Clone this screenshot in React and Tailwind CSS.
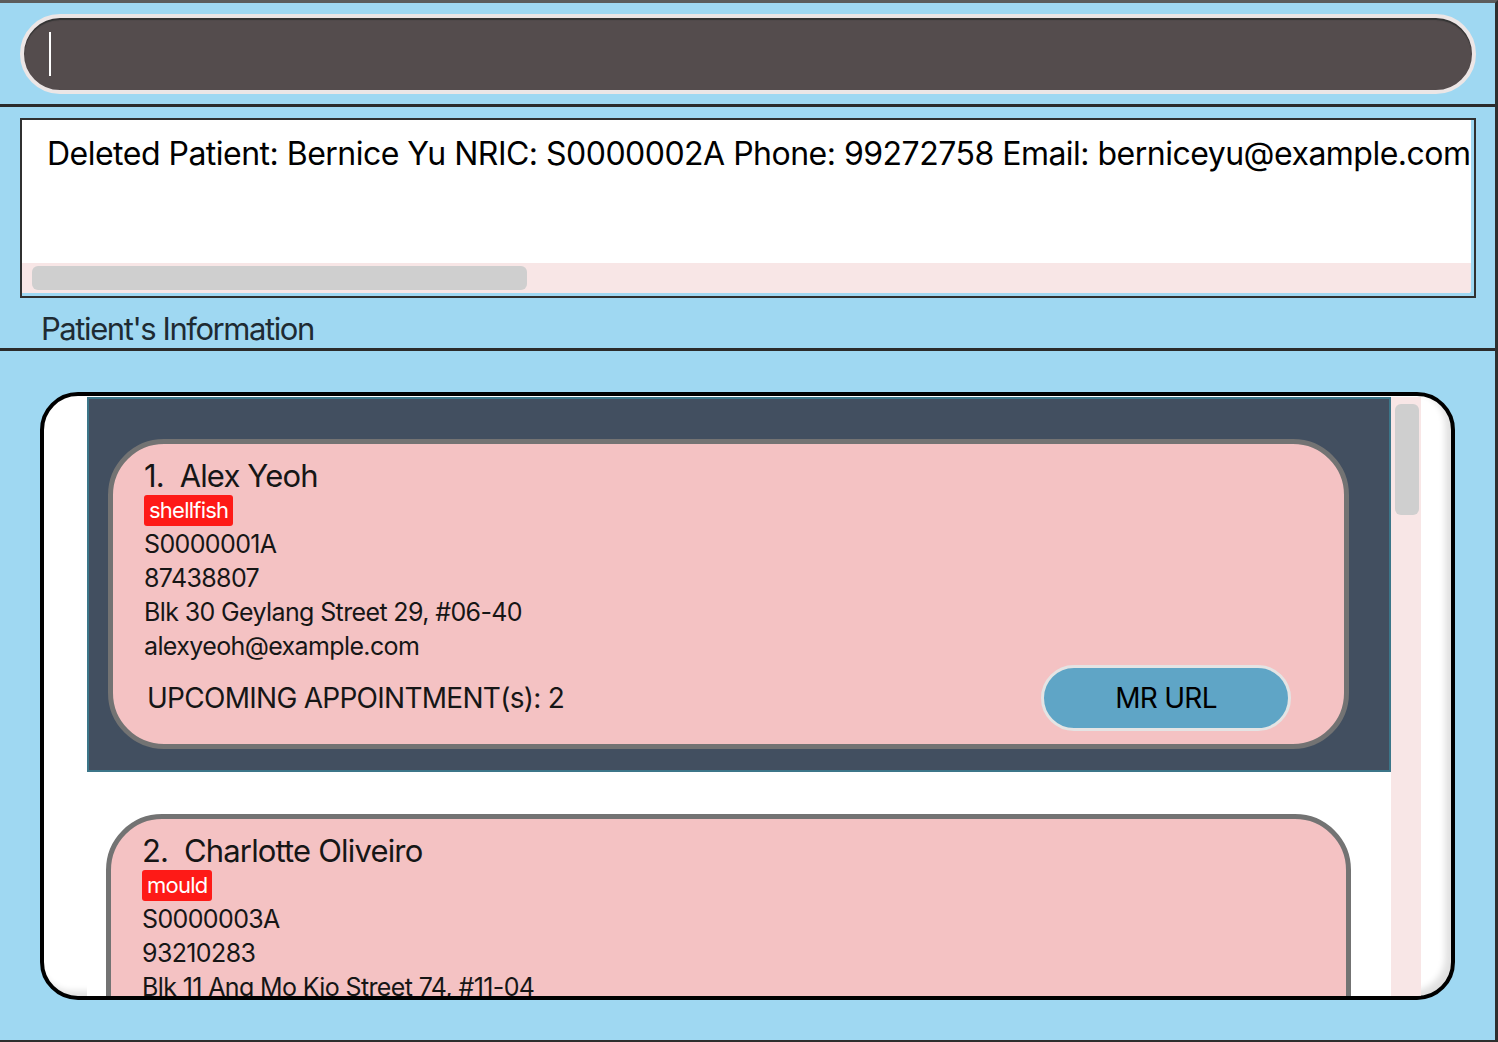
import React from 'react';

const patients = [
  {
    id: 1,
    name: 'Alex Yeoh',
    tag: 'shellfish',
    nric: 'S0000001A',
    phone: '87438807',
    address: 'Blk 30 Geylang Street 29, #06-40',
    email: 'alexyeoh@example.com',
    appointments: 2,
  },
  {
    id: 2,
    name: 'Charlotte Oliveiro',
    tag: 'mould',
    nric: 'S0000003A',
    phone: '93210283',
    address: 'Blk 11 Ang Mo Kio Street 74, #11-04',
    email: 'charlotte@example.com',
    appointments: 0,
  },
];

function PatientCard({ patient, selected }) {
  return (
    <div
      className={`pt-[40px] pb-[21px] border-y-2 ${
        selected
          ? 'bg-[#424f60] border-x-2 border-[#3c7689] pl-[19px] pr-[40px]'
          : 'bg-white border-transparent pl-[19px] pr-[40px]'
      }`}
    >
      <div className="bg-[#f4c2c3] border-[5px] border-[#737373] rounded-[56px] pt-[13px] pb-[13px] pl-[31px] pr-[53px]">
        <div className="text-[31px] leading-[38px] text-[#161616] tracking-[-0.027em]">
          {patient.id}.&nbsp;&nbsp;{patient.name}
        </div>
        <div className="flex">
          <span className="bg-[#fe1a17] text-white text-[22px] leading-[31px] px-[5px] rounded-[3px] tracking-[-0.035em]">
            {patient.tag}
          </span>
        </div>
        <div className="mt-px text-[25px] leading-[34px] text-[#161616] tracking-[-0.025em]">
          <div>{patient.nric}</div>
          <div>{patient.phone}</div>
          <div>{patient.address}</div>
          <div>{patient.email}</div>
        </div>
        <div className="mt-[2px] flex items-center justify-between">
          <div className="pl-[3px] text-[28px] text-[#161616] tracking-[-0.026em]">
            UPCOMING APPOINTMENT(s): {patient.appointments}
          </div>
          <button className="w-[250px] h-[66px] rounded-full bg-[#5fa5c6] border-[3px] border-[#e4e4e4] text-[28px] text-black tracking-[-0.026em]">
            MR URL
          </button>
        </div>
      </div>
    </div>
  );
}

export default function App() {
  return (
    <div
      className="w-[1498px] h-[1042px] bg-[#9fd8f2] border-t-[3px] border-t-[#5c5c5c] border-r-[3px] border-b-[2px] border-r-[#2e2e2e] border-b-[#2e2e2e] flex flex-col overflow-hidden"
      style={{ fontFamily: 'Inter, "Noto Sans", sans-serif' }}
    >
      {/* Command box */}
      <div className="pt-[11px] pb-[10px] pl-[20px] pr-[19px]">
        <div className="h-[80px] rounded-full border-[4px] border-[#ece6e6] bg-[#544c4d] shadow-[inset_0_2px_1px_#333] flex items-center pl-[25px]">
          <div className="w-[2px] h-[44px] bg-white" />
        </div>
      </div>

      <div className="h-[3px] bg-[#2b2b2b]" />

      {/* Result display */}
      <div className="pt-[11px] pl-[20px] pr-[19px]">
        <div className="h-[180px] border-2 border-[#303030] bg-[#9fd8f2] pr-[3px] pb-[3px]">
          <div className="h-full bg-white flex flex-col overflow-hidden rounded-br-[3px]">
            <div className="flex-1 pl-[25px] pt-[14px] text-[32px] leading-[40px] text-black whitespace-nowrap overflow-hidden tracking-[-0.016em]">
              Deleted Patient: Bernice Yu NRIC: S0000002A Phone: 99272758 Email: berniceyu@example.com
            </div>
            <div className="h-[30px] bg-[#f8e6e6] flex items-center pl-[10px]">
              <div className="w-[495px] h-[24px] rounded-[6px] bg-[#cfcfcf]" />
            </div>
          </div>
        </div>
        <div className="pl-[21px] mt-[12px] text-[31px] leading-[38px] text-[#1e2b33] tracking-[-0.046em]">
          Patient's Information
        </div>
      </div>

      <div className="h-[3px] bg-[#2b2b2b]" />

      {/* Patient list */}
      <div className="pt-[41px] px-[40px]">
        <div className="h-[608px] border-[4px] border-black rounded-[38px] bg-white shadow-[inset_-6px_-5px_6px_rgba(0,0,0,0.12)] overflow-hidden pl-[43px] pr-[30px] pt-px">
          <div className="h-full flex">
            <div className="flex-1 overflow-hidden">
              {patients.map((p, i) => (
                <PatientCard key={p.id} patient={p} selected={i === 0} />
              ))}
            </div>
            <div className="w-[30px] h-full bg-[#f8e6e6] pt-[7px] pl-[4px] pr-[2px]">
              <div className="h-[111px] rounded-[6px] bg-[#cfcfcf]" />
            </div>
          </div>
        </div>
      </div>
    </div>
  );
}
